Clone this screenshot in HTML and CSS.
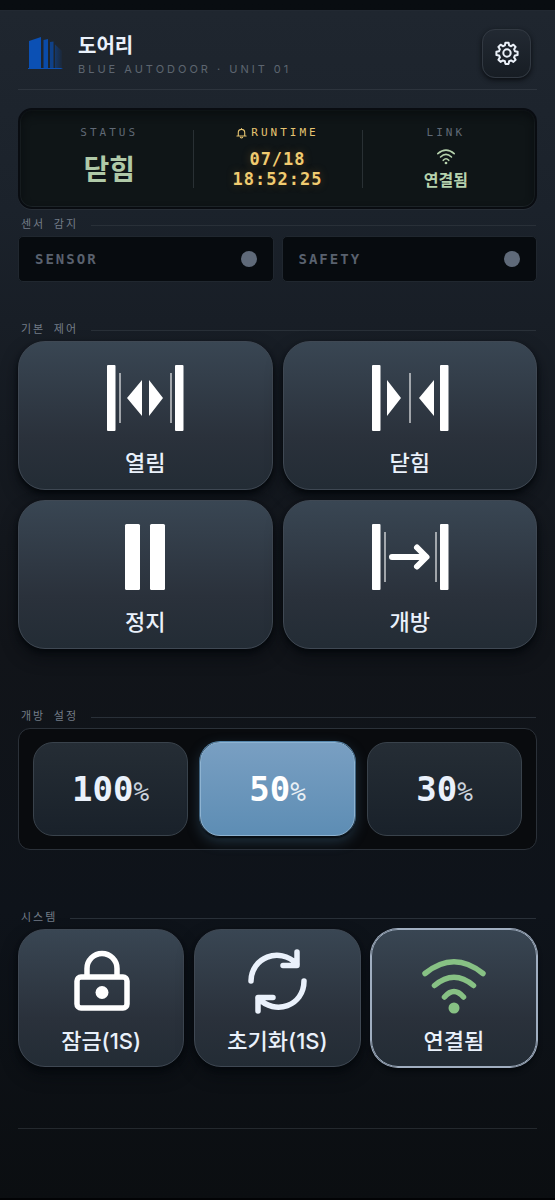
FILE: index.html
```html
<!DOCTYPE html>
<html lang="ko">
<head>
<meta charset="utf-8">
<meta name="viewport" content="width=device-width, initial-scale=1">
<title>도어리</title>
<link rel="stylesheet" href="styles.css">
</head>
<body>
<main class="app">
  <header class="header">
    <svg class="logo" viewBox="0 0 36 34" aria-hidden="true">
      <defs><linearGradient id="fade" x1="0" x2="1"><stop offset="0" stop-color="#0b4ba8"/><stop offset="1" stop-color="#0b4ba8" stop-opacity=".15"/></linearGradient></defs>
      <path d="M1 5 13 1V32H1Z" fill="#0b50b4"/>
      <path d="M15.500 4 20 3V32H15.500Z" fill="#0b4ba8"/>
      <path d="M22 6 25.500 5.500V32H22Z" fill="#0b4ba8" opacity=".75"/>
      <path d="M27 8.500 34 15V32H27Z" fill="url(#fade)" opacity=".5"/>
      <path d="M0 32H35L33 33H0Z" fill="#0b50b4"/>
    </svg>
    <div class="brand">
      <h1 class="title">도어리</h1>
      <p class="subtitle">BLUE AUTODOOR · UNIT 01</p>
    </div>
    <button class="settings" type="button" aria-label="설정">
      <svg viewBox="0 0 24 24" width="24" height="24" fill="none" stroke="#eaf0f8" stroke-width="2" stroke-linejoin="round"><path d="M10.400 1.700h3.200l.5 2.700 2 .8 2.300-1.500 2.200 2.200-1.500 2.300.8 2 2.700.5v3.200l-2.700.5-.8 2 1.500 2.300-2.200 2.200-2.300-1.500-2 .8-.5 2.700h-3.200l-.5-2.700-2-.8-2.300 1.500-2.200-2.200 1.500-2.300-.8-2-2.700-.5v-3.200l2.700-.5.8-2-1.500-2.300 2.200-2.200 2.300 1.500 2-.8Z"/><circle cx="12" cy="12" r="3.700"/></svg>
    </button>
  </header>

  <section class="panel">
    <div class="cell">
      <div class="cell-label">STATUS</div>
      <div class="state">닫힘</div>
    </div>
    <div class="cell runtime">
      <div class="cell-label"><svg viewBox="0 0 12 12" width="11" height="11" fill="none" stroke="currentColor" stroke-width="1.2" stroke-linejoin="round" stroke-linecap="round"><path d="M2.500 8.500V5a3.500 3.500 0 0 1 7 0v3.500M1 8.700h10M4.800 10.300q1.200 1.300 2.400 0M6 .6v.8"/></svg>RUNTIME</div>
      <div class="clock">07/18<br>18:52:25</div>
    </div>
    <div class="cell">
      <div class="cell-label">LINK</div>
      <div class="link">
        <svg viewBox="0 0 66 56" width="18" height="16" fill="none" stroke="currentColor" stroke-width="6" stroke-linecap="round"><path d="M3 16Q33-10 63 16M13 28Q33 9 53 28M23 40Q33 29 43 40"/><circle cx="33" cy="50" r="5" fill="currentColor" stroke="none"/></svg>
        <span>연결됨</span>
      </div>
    </div>
  </section>

  <section class="group group-sensor">
    <h2 class="group-label">센서 감지</h2>
    <div class="sensors">
      <div class="sensor"><span>SENSOR</span><i class="dot"></i></div>
      <div class="sensor"><span>SAFETY</span><i class="dot"></i></div>
    </div>
  </section>

  <section class="group group-control">
    <h2 class="group-label">기본 제어</h2>
    <div class="controls">
      <button class="key" type="button">
        <svg viewBox="0 0 78 66" width="78" height="66" fill="#fff"><rect x="1" width="8.500" height="66" rx="1"/><rect x="69" width="8.500" height="66" rx="1"/><path d="M13 8h2v50h-2ZM64 8h2v50h-2Z" opacity=".55"/><path d="M36 15v36L21 33ZM43 15v36L57 33Z"/></svg>
        <span>열림</span>
      </button>
      <button class="key" type="button">
        <svg viewBox="0 0 78 66" width="78" height="66" fill="#fff"><rect x="1" width="8.500" height="66" rx="1"/><rect x="69" width="8.500" height="66" rx="1"/><path d="M38 8h2v50h-2Z" opacity=".55"/><path d="M16 15v36L30 33ZM63 15v36L48 33Z"/></svg>
        <span>닫힘</span>
      </button>
      <button class="key" type="button">
        <svg viewBox="0 0 78 66" width="78" height="66" fill="#fff"><rect x="19" width="15" height="66" rx="1.500"/><rect x="44" width="15" height="66" rx="1.500"/></svg>
        <span>정지</span>
      </button>
      <button class="key" type="button">
        <svg viewBox="0 0 78 66" width="78" height="66" fill="#fff"><rect x="1" width="8.500" height="66" rx="1"/><rect x="69" width="8.500" height="66" rx="1"/><path d="M13 8h2v50h-2ZM64 8h2v50h-2Z" opacity=".55"/><path d="M21 33H55M46 23.500 55.500 33 46 42.500" fill="none" stroke="#fff" stroke-width="6" stroke-linecap="round" stroke-linejoin="round"/></svg>
        <span>개방</span>
      </button>
    </div>
  </section>

  <section class="group">
    <h2 class="group-label">개방 설정</h2>
    <div class="levels">
      <button class="level" type="button">100<small>%</small></button>
      <button class="level level-on" type="button" aria-pressed="true">50<small>%</small></button>
      <button class="level" type="button">30<small>%</small></button>
    </div>
  </section>

  <section class="group">
    <h2 class="group-label">시스템</h2>
    <div class="system">
      <button class="key key-system" type="button">
        <svg viewBox="0 0 66 66" width="66" height="66" fill="none" stroke="#fff" stroke-width="5.500"><rect x="9" y="27" width="50" height="31" rx="4"/><path d="M19 27V18.500a15 15 0 0 1 30 0V27"/><circle cx="34" cy="42.500" r="6.500" fill="#fff" stroke="none"/></svg>
        <span>잠금(1S)</span>
      </button>
      <button class="key key-system" type="button">
        <svg viewBox="0 0 66 66" width="66" height="66" fill="none" stroke="#eaf1fb" stroke-width="5.500" stroke-linecap="round" stroke-linejoin="round"><path d="M7 31C7 8 35-4 53 14M53 2V15.500H39M60 31C60 56 31 66 14 48M29 47.500H14V61"/></svg>
        <span>초기화(1S)</span>
      </button>
      <button class="key key-system key-active" type="button">
        <svg viewBox="0 0 66 66" width="66" height="66" fill="none" stroke="#87c184" stroke-width="5.500" stroke-linecap="round"><path d="M4 23.500Q33 0 62 23.500M13.500 35.500Q33 19 52.500 35.500M23.500 47Q33 36 42.500 47"/><circle cx="33" cy="58" r="5.500" fill="#87c184" stroke="none"/></svg>
        <span>연결됨</span>
      </button>
    </div>
  </section>
  <hr class="end">
</main>
</body>
</html>
```
FILE: styles.css
```css
* { box-sizing: border-box; }

body {
  margin: 0;
  padding: 10px 0 2px;
  min-height: 100vh;
  display: flex;
  background: linear-gradient(#090d11, #020305);
  color: #eaf1fb;
  font-family: Inter, "Noto Sans CJK KR", sans-serif;
}

.app {
  flex: 1;
  padding: 0 18px;
  border-top: 1px solid #222932;
  background: linear-gradient(#1f262f 0, #1b222b 200px, #151a21 420px, #111419 640px, #0e131a 900px, #0b0e11 1190px);
}

h1, h2, p { margin: 0; }
button { font: inherit; color: inherit; cursor: pointer; }
svg { display: block; flex: none; overflow: visible; }

.header {
  display: flex;
  align-items: center;
  gap: 14px;
  height: 79px;
  padding: 6px 6px 0 10px;
  border-bottom: 1px solid #2d343d;
}
.logo { width: 36px; height: 34px; }
.brand { flex: 1; padding-top: 6px; }
.title { font-size: 20px; line-height: 26px; font-weight: 700; }
.subtitle { font-size: 11px; line-height: 20px; letter-spacing: 3px; color: #5d6570; white-space: nowrap; }
.settings {
  display: grid;
  place-items: center;
  width: 49px;
  height: 49px;
  padding: 0;
  border: 1px solid #323942;
  border-radius: 13px;
  background: linear-gradient(#222932, #171d24);
  box-shadow: 0 2px 5px #0a0d11;
}

.panel {
  display: grid;
  grid-template-columns: repeat(3, 1fr);
  margin-top: 18px;
  padding: 16px 5px 15px;
  height: 101px;
  border: 2px solid #090c11;
  border-radius: 14px;
  background: #0f1517;
  box-shadow: inset 0 4px 8px #090d0f, inset 0 0 0 1px #20282c, 0 1px 0 #272e36;
}
.cell {
  display: flex;
  flex-direction: column;
  align-items: center;
  position: relative;
}
.cell + .cell::before {
  content: "";
  position: absolute;
  left: 0;
  top: 4px;
  bottom: 4px;
  width: 1px;
  background: #293034;
}
.cell-label {
  display: flex;
  align-items: center;
  gap: 4px;
  font: 11px/14px "DejaVu Sans Mono", monospace;
  letter-spacing: 3px;
  color: #606975;
}
.state { font-size: 28px; line-height: 32px; margin-top: 14px; font-weight: 700; color: #b0c9a8; }
.runtime, .runtime .cell-label { color: #e6c471; }
.clock {
  margin-top: 9px;
  font: 700 17px/20px "DejaVu Sans Mono", monospace;
  letter-spacing: 1px;
  text-align: center;
  color: #f0cb70;
  text-shadow: 0 0 8px #a46f2566;
}
.link { display: grid; justify-items: center; gap: 4px; margin-top: 9px; font-size: 16px; line-height: 22px; font-weight: 600; color: #b6d2ad; }

.group { margin-top: 61px; }
.group-sensor { margin-top: 9px; }
.group-control { margin-top: 41px; }
.group-label {
  display: flex;
  align-items: center;
  gap: 13px;
  margin-bottom: 4px;
  padding: 0 1px 0 3px;
  font: 400 11px/14px "DejaVu Sans Mono", "Noto Sans CJK KR", monospace;
  letter-spacing: 2px;
  color: #747d88;
}
.group-label::after { content: ""; flex: 1; height: 1px; background: #293038; }

.sensors { display: grid; grid-template-columns: 1fr 1fr; gap: 8px; }
.sensor {
  display: flex;
  align-items: center;
  justify-content: space-between;
  height: 46px;
  padding: 0 16px;
  border: 1px solid #20272f;
  border-radius: 5px;
  background: #070b0f;
  font: 700 14px/20px "DejaVu Sans Mono", monospace;
  letter-spacing: 2px;
  color: #59616e;
}
.dot { width: 16px; height: 16px; border-radius: 50%; background: #5f6a79; }

.controls { display: grid; grid-template-columns: 1fr 1fr; gap: 10px; }
.key {
  display: flex;
  flex-direction: column;
  align-items: center;
  justify-content: space-between;
  height: 149px;
  padding: 23px 0 11px;
  border: 1px solid #3f4853;
  border-radius: 27px;
  background: linear-gradient(#394653, #2a313b 65%, #232c35);
  box-shadow: 0 3px 4px #05090d, 0 8px 16px #05090d99;
  font-size: 22px;
  line-height: 30px;
  font-weight: 500;
}

.levels {
  display: grid;
  grid-template-columns: repeat(3, 1fr);
  gap: 12px;
  padding: 13px 14px;
  border: 1px solid #2b3139;
  border-radius: 12px;
  background: #090b0e;
}
.level {
  height: 94px;
  padding: 2px 0 0;
  border: 1px solid #39424b;
  border-radius: 20px;
  background: linear-gradient(#252d35, #19212a);
  font: 700 34px/40px "DejaVu Sans Mono", monospace;
}
.level small { font-size: 26px; font-weight: 400; opacity: .85; }
.level-on {
  border-color: #8eb3d1;
  background: linear-gradient(#799fc2, #5d8db4);
  box-shadow: 0 2px 2px #04080c, 0 0 0 1px #5686ac, 0 5px 14px #426b8970;
  color: #fff;
}

.system { display: grid; grid-template-columns: repeat(3, 1fr); gap: 10px; }
.key-system { height: 138px; padding: 20px 0 10px; }
.key-active { border-color: #a0aec0; box-shadow: 0 0 0 1px #a0aec0, 0 4px 5px #05090d; }

.end { margin: 61px 0 0; border: 0; height: 1px; background: #24292e; }
```
